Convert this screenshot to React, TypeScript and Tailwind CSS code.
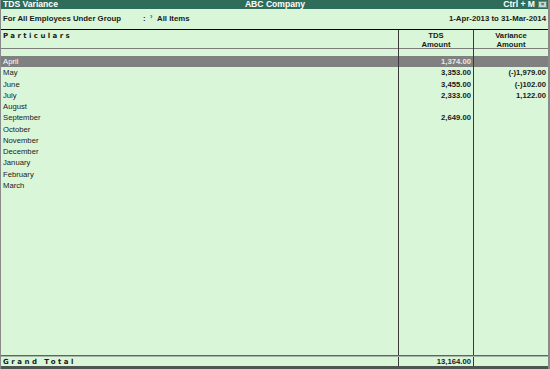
import React from "react";

const months = [
  "April",
  "May",
  "June",
  "July",
  "August",
  "September",
  "October",
  "November",
  "December",
  "January",
  "February",
  "March",
];

const tds = ["1,374.00", "3,353.00", "3,455.00", "2,333.00", "", "2,649.00", "", "", "", "", "", ""];
const variance = ["", "(-)1,979.00", "(-)102.00", "1,122.00", "", "", "", "", "", "", "", ""];

const cellBase = "h-[11.25px] leading-[11.25px] text-[7.7px] px-[2px]";

export default function App() {
  return (
    <div
      className="w-[550px] h-[369px] bg-[#d9f6d8] flex flex-col text-[#1a1a1a] overflow-hidden border-l border-[#8a8a8a] border-r-2"
      style={{ fontFamily: '"Liberation Sans", Arial, sans-serif' }}
    >
      {/* Title bar */}
      <div className="h-[9px] bg-[#2f6d5b] flex items-center justify-between text-white font-bold text-[8.6px] leading-[9px] pl-[2px] pr-[1px]">
        <span className="w-[120px]">TDS Variance</span>
        <span>ABC Company</span>
        <span className="w-[120px] flex justify-end items-center gap-[3px]">
          <span>Ctrl + M</span>
          <span className="w-[9px] h-[7px] bg-[#c8d8cf] border border-[#6a8a7c] text-[#2f4f44] text-[6px] leading-[5px] flex items-center justify-center">
            ×
          </span>
        </span>
      </div>

      {/* Filter row */}
      <div className="h-[20px] flex items-center justify-between font-bold text-[7.8px] pl-[2px] pr-[2px]">
        <div className="flex items-center">
          <span className="w-[140px]">For All Employees Under Group</span>
          <span className="w-[7px]">:</span>
          <span className="w-[7px] text-[6px] -mt-[3px]">ˀ</span>
          <span>All Items</span>
        </div>
        <span>1-Apr-2013 to 31-Mar-2014</span>
      </div>

      {/* Table */}
      <div className="flex-1 flex flex-col border-t border-black">
        {/* Header */}
        <div className="h-[19px] grid grid-cols-[397px_75px_75px] border-b border-[#7d7d7d] font-bold text-[7.7px] leading-[9px]">
          <div
            className="pl-[2px] pt-[2px] tracking-[2.4px]"
            style={{ fontFamily: '"DejaVu Sans", Verdana, sans-serif', fontSize: "7px" }}
          >
            Particulars
          </div>
          <div className="border-l border-[#3a3a3a] text-center pt-[1px]">
            <div>TDS</div>
            <div>Amount</div>
          </div>
          <div className="border-l border-[#3a3a3a] text-center pt-[1px]">
            <div>Variance</div>
            <div>Amount</div>
          </div>
        </div>

        {/* Body */}
        <div className="flex-1 grid grid-cols-[397px_75px_75px] border-b border-[#5e665e]">
          <div className="pt-[7px]">
            {months.map((m, i) => (
              <div key={m} className={`${cellBase} ${i === 0 ? "bg-[#808080] text-white" : ""}`}>
                {m}
              </div>
            ))}
          </div>
          <div className="pt-[7px] border-l border-[#3a3a3a]">
            {tds.map((v, i) => (
              <div
                key={i}
                className={`${cellBase} text-right font-bold ${i === 0 ? "bg-[#808080] text-[#e8e8e8]" : ""}`}
              >
                {v}
              </div>
            ))}
          </div>
          <div className="pt-[7px] border-l border-[#3a3a3a]">
            {variance.map((v, i) => (
              <div
                key={i}
                className={`${cellBase} text-right font-bold ${i === 0 ? "bg-[#808080]" : ""}`}
              >
                {v}
              </div>
            ))}
          </div>
        </div>

        {/* Grand total */}
        <div className="h-[10px] grid grid-cols-[397px_75px_75px] font-bold text-[7.7px] leading-[10px] border-t border-[#a8b8a8]">
          <div
            className="pl-[2px] tracking-[2.5px]"
            style={{ fontFamily: '"DejaVu Sans", Verdana, sans-serif', fontSize: "7px" }}
          >
            Grand Total
          </div>
          <div className="border-l border-[#3a3a3a] text-right px-[2px]">13,164.00</div>
          <div className="border-l border-[#3a3a3a]"></div>
        </div>
      </div>

      {/* Bottom border */}
      <div className="h-[3px] bg-[#4f5550]"></div>
    </div>
  );
}
